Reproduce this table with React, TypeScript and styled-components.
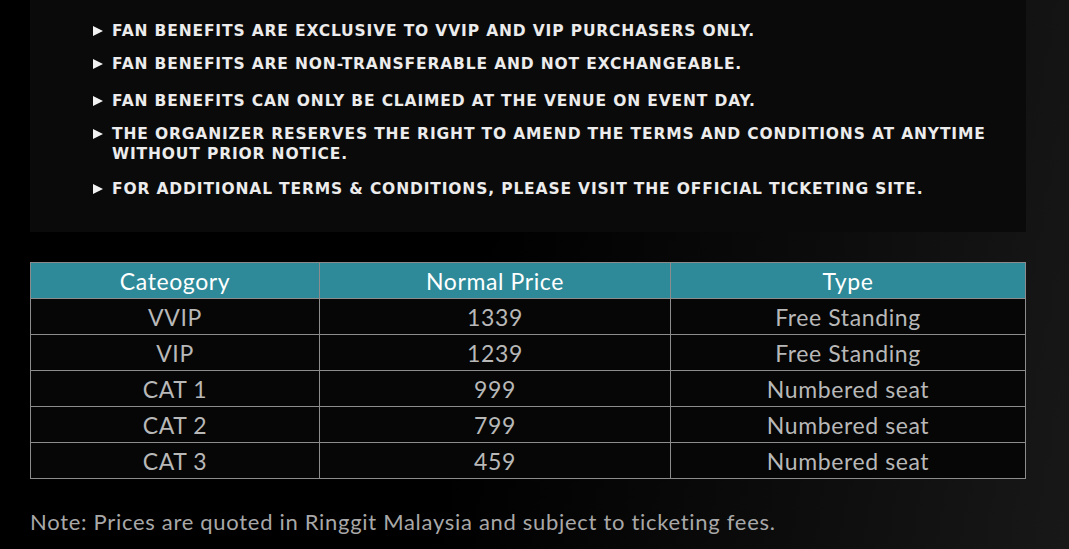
import styled, { createGlobalStyle } from "styled-components";

const GlobalStyle = createGlobalStyle`
  html, body {
    margin: 0;
    padding: 0;
    height: 100%;
  }
  body {
    background: linear-gradient(100deg, #000 0%, #000 45%, #0c0c0c 75%, #181818 100%);
    overflow: hidden;
  }
`;

const terms = [
  { lines: ["FAN BENEFITS ARE EXCLUSIVE TO VVIP AND VIP PURCHASERS ONLY."], offset: 0 },
  { lines: ["FAN BENEFITS ARE NON-TRANSFERABLE AND NOT EXCHANGEABLE."], offset: 0 },
  { lines: ["FAN BENEFITS CAN ONLY BE CLAIMED AT THE VENUE ON EVENT DAY."], offset: 4 },
  {
    lines: ["THE ORGANIZER RESERVES THE RIGHT TO AMEND THE TERMS AND CONDITIONS AT ANYTIME", "WITHOUT PRIOR NOTICE."],
    offset: 0,
  },
  { lines: ["FOR ADDITIONAL TERMS & CONDITIONS, PLEASE VISIT THE OFFICIAL TICKETING SITE."], offset: 2 },
];

const prices = [
  { cat: "VVIP", price: "1339", type: "Free Standing" },
  { cat: "VIP", price: "1239", type: "Free Standing" },
  { cat: "CAT 1", price: "999", type: "Numbered seat" },
  { cat: "CAT 2", price: "799", type: "Numbered seat" },
  { cat: "CAT 3", price: "459", type: "Numbered seat" },
];

const App = () => {
  return (
    <Page>
      <GlobalStyle />
      <TermsBox>
        {terms.map((t, i) => (
          <Term key={i} $offset={t.offset}>
            <Arrow />
            <TermText>
              {t.lines.map((l) => (
                <div key={l}>{l}</div>
              ))}
            </TermText>
          </Term>
        ))}
      </TermsBox>
      <PriceTable>
        <colgroup>
          <col style={{ width: 289 }} />
          <col style={{ width: 351 }} />
          <col />
        </colgroup>
        <thead>
          <tr>
            <Th>Cateogory</Th>
            <Th>Normal Price</Th>
            <Th>Type</Th>
          </tr>
        </thead>
        <tbody>
          {prices.map((p) => (
            <tr key={p.cat}>
              <Td>{p.cat}</Td>
              <Td>{p.price}</Td>
              <Td>{p.type}</Td>
            </tr>
          ))}
        </tbody>
      </PriceTable>
      <Note>Note: Prices are quoted in Ringgit Malaysia and subject to ticketing fees.</Note>
    </Page>
  );
};

export default App;

const Page = styled.div`
  width: 996px;
  padding-left: 30px;
  font-family: Lato, "Open Sans", sans-serif;
`;

const TermsBox = styled.div`
  background: #0a0a0a;
  height: 232px;
  box-sizing: border-box;
  padding: 21px 0 0 63px;
  display: flex;
  flex-direction: column;
  gap: 13px;
`;

const Term = styled.div<{ $offset: number }>`
  display: flex;
  align-items: flex-start;
  margin-top: ${(p) => p.$offset}px;
`;

const Arrow = styled.span`
  flex: none;
  width: 0;
  height: 0;
  margin: 5px 9px 0 0;
  border-top: 5px solid transparent;
  border-bottom: 5px solid transparent;
  border-left: 10px solid #f2f2f2;
`;

const TermText = styled.div`
  font-family: "DejaVu Sans", "Liberation Sans", sans-serif;
  font-weight: bold;
  font-size: 15.5px;
  letter-spacing: 0.85px;
  line-height: 20px;
  color: #ececec;
  white-space: nowrap;
`;

const PriceTable = styled.table`
  width: 996px;
  margin-top: 30px;
  border-collapse: collapse;
  table-layout: fixed;
  background: #060606;
`;

const Th = styled.th`
  background: #2e8a99;
  color: #ffffff;
  font-weight: normal;
  font-size: 23px;
  letter-spacing: 0.6px;
  height: 34px;
  padding: 1px 0 0;
  border: 1px solid #8c8c8c;
  text-align: center;
  line-height: 34px;
`;

const Td = styled.td`
  color: #b8b8b8;
  font-size: 23px;
  letter-spacing: 0.6px;
  height: 34px;
  padding: 1px 0 0;
  border: 1px solid #8c8c8c;
  text-align: center;
  line-height: 34px;
`;

const Note = styled.p`
  margin: 30px 0 0;
  color: #a8a8a8;
  font-size: 22px;
  letter-spacing: 0.7px;
  line-height: 26px;
`;
